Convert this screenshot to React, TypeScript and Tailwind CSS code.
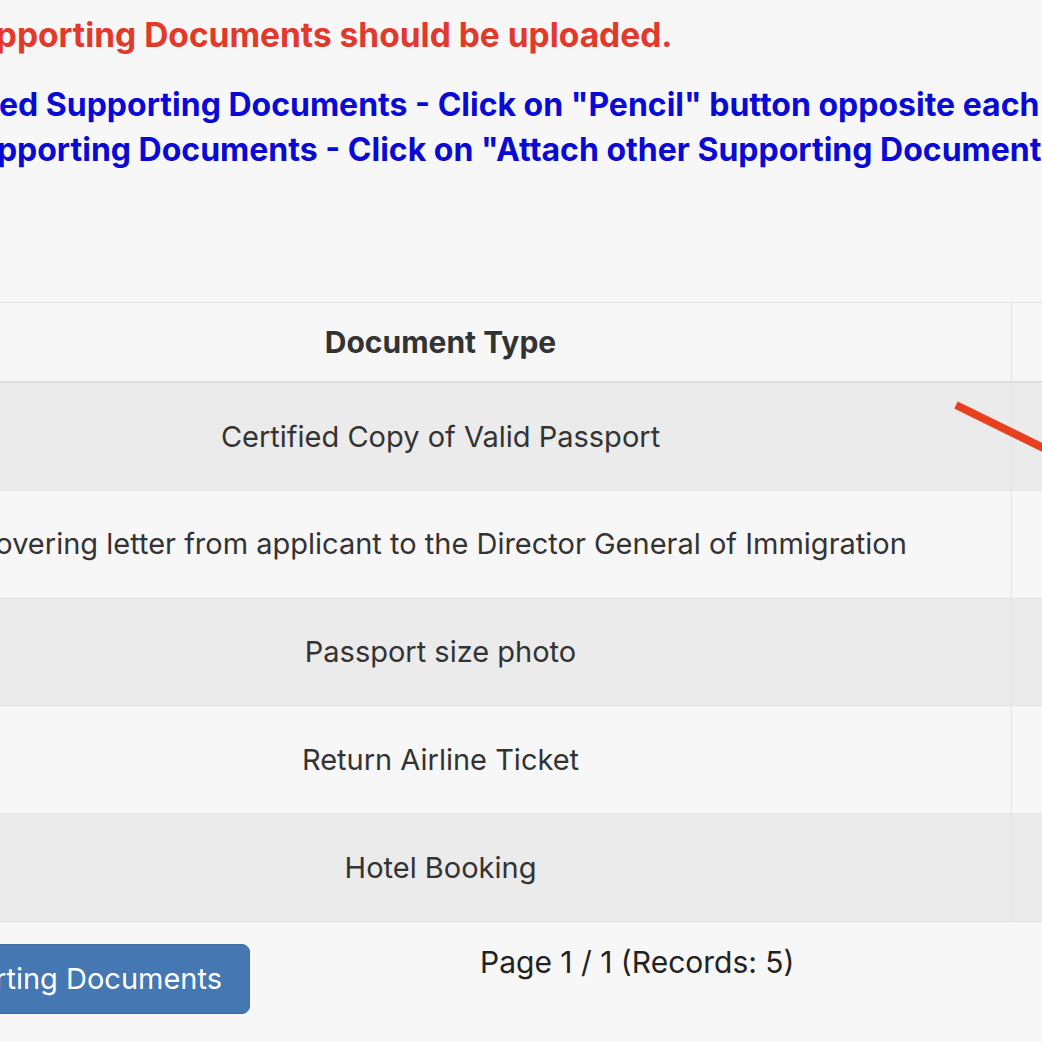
import React from "react";

const rows = [
  "Certified Copy of Valid Passport",
  "Covering letter from applicant to the Director General of Immigration",
  "Passport size photo",
  "Return Airline Ticket",
  "Hotel Booking",
];

export default function App() {
  return (
    <div
      className="relative w-[1042px] h-[1042px] overflow-hidden bg-[#f7f7f7]"
      style={{ fontFamily: "Inter, 'Noto Sans', sans-serif" }}
    >
      {/* notes */}
      <div className="pt-[12px] whitespace-nowrap font-bold">
        <p className="-ml-[47px] text-[#e3392b] text-[33.5px] leading-[46px]">Supporting Documents should be uploaded.</p>
        <div className="mt-[24px] text-[#0a0ad6] text-[32px] leading-[45px]">
          <p className="-ml-[1px]">ed Supporting Documents - Click on "Pencil" button opposite each document</p>
          <p className="-ml-[44px]">Supporting Documents - Click on "Attach other Supporting Documents" button</p>
        </div>
      </div>

      {/* table */}
      <div className="mt-[130px] -ml-[130px] w-[1300px] border-t border-[#e3e3e3] text-[#333]">
        <div className="flex h-[80px] border-b-2 border-[#dedede] bg-[#f7f7f7]">
          <div className="w-[1142px] shrink-0 border-r border-[#e3e3e3] flex items-center justify-center font-bold text-[30px]">
            Document Type
          </div>
          <div className="flex-1" />
        </div>
        {rows.map((r, i) => (
          <div
            key={r}
            className={`flex h-[107.8px] border-b border-[#e3e3e3] ${i % 2 === 0 ? "bg-[#ebebeb]" : "bg-[#f7f7f7]"}`}
          >
            <div className="w-[1142px] shrink-0 border-r border-[#e3e3e3] flex items-center justify-center text-[29px] whitespace-nowrap">
              {r}
            </div>
            <div className="flex-1" />
          </div>
        ))}
      </div>

      {/* footer */}
      <div className="flex items-start mt-[22px]">
        <div className="w-[250px] shrink-0 flex justify-end">
          <button className="shrink-0 whitespace-nowrap h-[70px] px-[27px] rounded-[8px] bg-[#4577b2] border border-[#3d6ba3] text-white text-[29px]">
            Attach other Supporting Documents
          </button>
        </div>
        <div className="ml-[230px] -mt-[4px] text-[30px] text-[#222] whitespace-nowrap">Page 1 / 1 (Records: 5)</div>
      </div>

      {/* annotation arrow */}
      <svg className="absolute left-[950px] top-[398px]" width="100" height="60" viewBox="0 0 100 60">
        <line x1="6" y1="7" x2="120" y2="63" stroke="#e8401f" strokeWidth="8" />
      </svg>
    </div>
  );
}
